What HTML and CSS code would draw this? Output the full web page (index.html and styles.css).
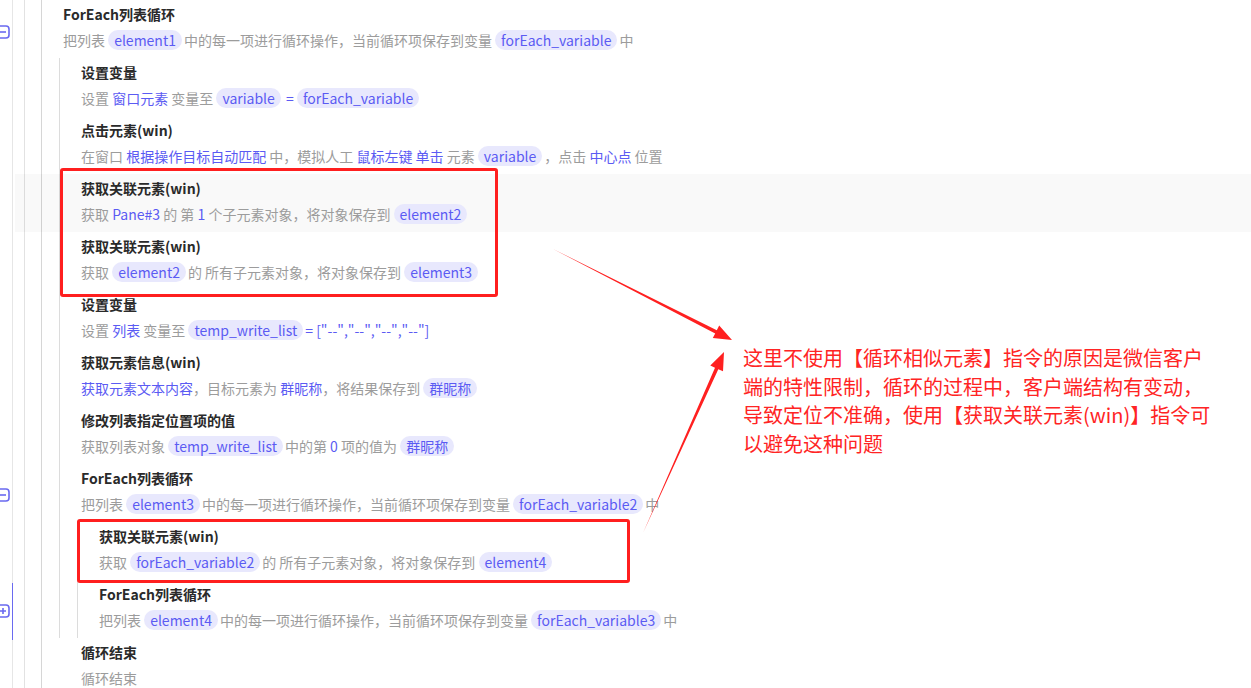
FILE: index.html
```html
<!DOCTYPE html>
<html lang="zh-CN">
<head>
  <meta charset="UTF-8" />
  <title>流程指令</title>
  <link rel="stylesheet" href="styles.css">
</head>
<body>
  <div class="canvas">
    <div class="level1">
      <div class="item">
        <div class="title">ForEach列表循环</div>
        <div class="desc">把列表 <span class="chip">element1</span>中的每一项进行循环操作，当前循环项保存到变量 <span class="chip">forEach_variable</span>中</div>
      </div>

      <div class="children">
        <div class="item">
          <div class="title">设置变量</div>
          <div class="desc">设置 <span class="hl">窗口元素</span> 变量至 <span class="chip">variable</span> <span class="hl">=</span> <span class="chip">forEach_variable</span></div>
        </div>
        <div class="item">
          <div class="title">点击元素(win)</div>
          <div class="desc">在窗口 <span class="hl">根据操作目标自动匹配</span> 中，模拟人工 <span class="hl">鼠标左键</span> <span class="hl">单击</span> 元素 <span class="chip">variable</span>，点击 <span class="hl">中心点</span> 位置</div>
        </div>
        <div class="item hover">
          <div class="title">获取关联元素(win)</div>
          <div class="desc">获取 <span class="hl">Pane#3</span> 的 第 <span class="hl">1</span> 个子元素对象，将对象保存到 <span class="chip">element2</span></div>
        </div>
        <div class="item">
          <div class="title">获取关联元素(win)</div>
          <div class="desc">获取 <span class="chip">element2</span>的 所有子元素对象，将对象保存到 <span class="chip">element3</span></div>
        </div>
        <div class="item">
          <div class="title">设置变量</div>
          <div class="desc">设置 <span class="hl">列表</span> 变量至 <span class="chip">temp_write_list</span><span class="hl">= ["--","--","--","--"]</span></div>
        </div>
        <div class="item">
          <div class="title">获取元素信息(win)</div>
          <div class="desc"><span class="hl">获取元素文本内容</span>，目标元素为 <span class="hl">群昵称</span>，将结果保存到 <span class="chip">群昵称</span></div>
        </div>
        <div class="item">
          <div class="title">修改列表指定位置项的值</div>
          <div class="desc">获取列表对象 <span class="chip">temp_write_list</span>中的第 <span class="hl">0</span> 项的值为 <span class="chip">群昵称</span></div>
        </div>
        <div class="item">
          <div class="title">ForEach列表循环</div>
          <div class="desc">把列表 <span class="chip">element3</span>中的每一项进行循环操作，当前循环项保存到变量 <span class="chip">forEach_variable2</span>中</div>
        </div>

        <div class="children">
          <div class="item">
            <div class="title">获取关联元素(win)</div>
            <div class="desc">获取 <span class="chip">forEach_variable2</span>的 所有子元素对象，将对象保存到 <span class="chip">element4</span></div>
          </div>
          <div class="item">
            <div class="title">ForEach列表循环</div>
            <div class="desc">把列表 <span class="chip">element4</span>中的每一项进行循环操作，当前循环项保存到变量 <span class="chip">forEach_variable3</span>中</div>
          </div>
        </div>
      </div>

      <div class="item end">
        <div class="title">循环结束</div>
        <div class="desc">循环结束</div>
      </div>
    </div>

    <!-- gutter controls -->
    <svg class="fold" style="top:25px" viewBox="0 0 14 14"><rect x="1" y="1" width="12" height="12" rx="3"/><path d="M4 7h6"/></svg>
    <svg class="fold" style="top:488px" viewBox="0 0 14 14"><rect x="1" y="1" width="12" height="12" rx="3"/><path d="M4 7h6"/></svg>
    <svg class="fold" style="top:604px" viewBox="0 0 14 14"><rect x="1" y="1" width="12" height="12" rx="3"/><path d="M4 7h6M7 4v6"/></svg>
    <div class="guide"></div>

    <!-- annotations -->
    <div class="mark mark-a"></div>
    <div class="mark mark-b"></div>
    <svg class="arrows" viewBox="0 0 1251 688">
      <polygon points="553,249 715.2,333.4 712.8,338 732,340 719.2,325.6 716.8,330.2" />
      <polygon points="643,533 718.3,369.2 723,371.3 724,352 710.3,365.6 715,367.7" />
    </svg>
    <div class="note">这里不使用【循环相似元素】指令的原因是微信客户端的特性限制，循环的过程中，客户端结构有变动，导致定位不准确，使用【获取关联元素(win)】指令可以避免这种问题</div>
  </div>
</body>
</html>
```

FILE: styles.css
```css
body {
  margin: 0;
  background: #fff;
  font-family: "Noto Sans CJK SC", "Noto Sans", sans-serif;
}
.canvas {
  position: relative;
  width: 1251px;
  height: 688px;
  overflow: hidden;
  background-image:
    linear-gradient(#e6e6e6, #e6e6e6),
    linear-gradient(#e2e2e2, #e2e2e2),
    linear-gradient(#d6d6d6, #d6d6d6);
  background-size: 1px 100%;
  background-position: 12px 0, 24px 0, 41px 0;
  background-repeat: no-repeat;
}
.level1 {
  padding-left: 63px;
}
.children {
  margin-left: -4px;
  padding-left: 21px;
  border-left: 1px solid #dcdcdc;
}
.item {
  padding: 4px 0 8px;
}
.item.hover {
  margin-left: -66px;
  padding-left: 66px;
  background: rgba(0, 0, 0, 0.022);
}
.item.end {
  padding-left: 18px;
}
.title {
  font-size: 14px;
  line-height: 20px;
  font-weight: 700;
  color: #2a2a2a;
}
.desc {
  margin-top: 6px;
  font-size: 14px;
  line-height: 20px;
  color: #9c9c9c;
  white-space: nowrap;
}
.hl {
  color: #5b5bf3;
}
.chip {
  display: inline-block;
  padding: 0 6px;
  margin-right: 2px;
  border-radius: 10px;
  background: #e8e8fd;
  color: #5b5bf3;
  line-height: 20px;
}
.fold {
  position: absolute;
  left: -4px;
  width: 14px;
  height: 14px;
  fill: #fff;
  stroke: #6a6af0;
  stroke-width: 1.6;
}
.guide {
  position: absolute;
  left: 12px;
  top: 583px;
  width: 1px;
  height: 57px;
  background: #6a6af0;
}
.mark {
  position: absolute;
  box-sizing: border-box;
  border: 3px solid #ff1f1f;
  border-radius: 3px;
}
.mark-a {
  left: 60px;
  top: 168px;
  width: 438px;
  height: 129px;
}
.mark-b {
  left: 77px;
  top: 519px;
  width: 553px;
  height: 64px;
}
.arrows {
  position: absolute;
  left: 0;
  top: 0;
  width: 1251px;
  height: 688px;
  fill: #ff2020;
  pointer-events: none;
}
.note {
  position: absolute;
  left: 743px;
  top: 344px;
  width: 470px;
  font-size: 20px;
  line-height: 28.5px;
  color: #ff2424;
}
```
